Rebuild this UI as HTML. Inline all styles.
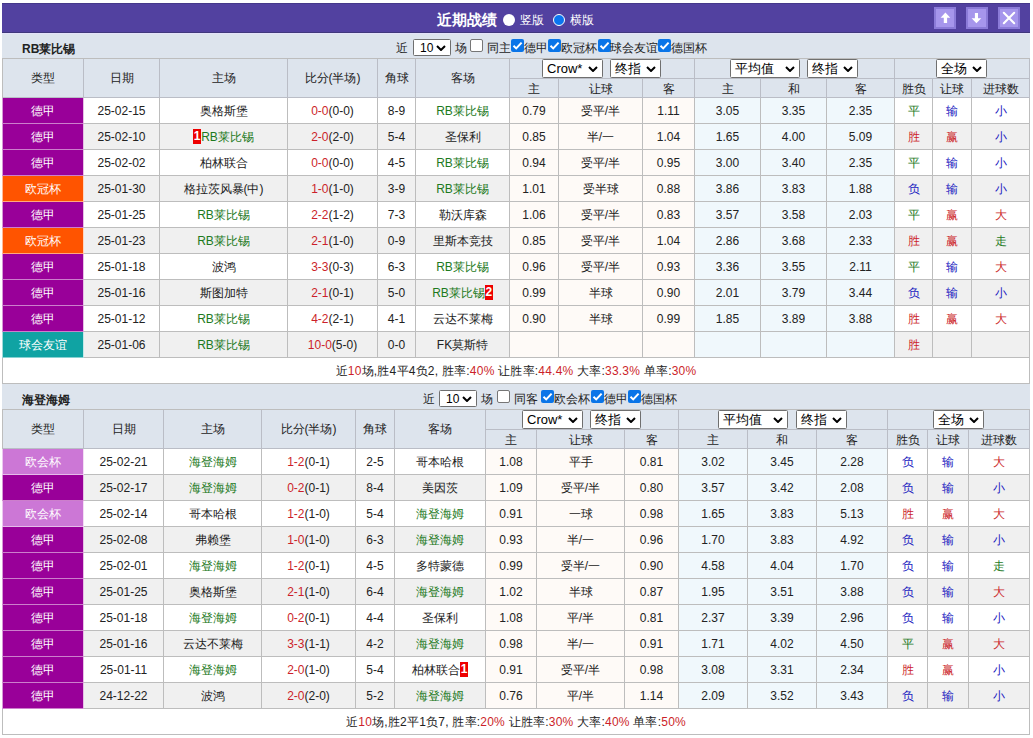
<!DOCTYPE html><html><head><meta charset="utf-8"><style>
*{margin:0;padding:0;box-sizing:border-box}
html,body{width:1033px;height:738px;overflow:hidden;background:#fff}
body{font-family:"Liberation Sans",sans-serif;font-size:12px;color:#222;position:relative}
.c{position:absolute;border-right:1px solid #bdbdbd;border-bottom:1px solid #bdbdbd;text-align:center;white-space:nowrap;overflow:hidden}
.ln{position:absolute;background:#bdbdbd}
.lg{color:#fff;border-left:1px solid rgba(255,255,255,.6);border-right-color:rgba(255,255,255,.75);border-bottom-color:rgba(255,255,255,.5)}
.h{border-color:#babdc6}
.bd{display:inline-block;background:#e00;color:#fff;font-weight:bold;line-height:15px;height:15px;width:8px;text-align:center;vertical-align:middle;position:relative;top:-1px}
.bar{position:absolute;left:2px;top:3px;width:1028px;height:30px;background:#5241a0;border-top:1px solid #45388a;border-bottom:1px solid #40387c}
.title{position:absolute;left:435px;top:1px;line-height:30px;color:#fff;font-weight:bold;font-size:15px}
.btn{position:absolute;top:4px;width:22px;height:22px;background:#a696ec;border:2px solid #8b7bd8}
.team{position:absolute;left:2px;width:1028px;height:25px;background:#dde4ed}
.tn{position:absolute;left:20px;font-weight:bold;line-height:25px}
.sel{position:absolute;background:#fff;border:1px solid #6f6f6f;border-radius:1.5px;color:#000;padding-left:4px;text-align:left;white-space:nowrap}
.ct{position:absolute;line-height:25px;white-space:nowrap}
.sum{position:absolute;text-align:center;color:#333}
.r{color:#cc1f2a}
.cb{display:inline-block;width:13px;height:13px;vertical-align:-2px;border-radius:2px}
.cb.on{background:#0a75e8;position:relative}
.cb.off{background:#fff;border:1px solid #767676}
.ctrl{position:absolute;line-height:25px;white-space:nowrap}
</style></head><body>
<div class="bar"><div class="title">近期战绩</div>
</div>
<div style="position:absolute;left:503px;top:14px;width:12px;height:12px;border-radius:50%;background:#fff"></div>
<div style="position:absolute;left:520px;top:5px;line-height:30px;color:#fff">竖版</div>
<div style="position:absolute;left:553px;top:14px;width:12px;height:12px;border-radius:50%;background:#0a75f0;border:1.6px solid #fff"></div>
<div style="position:absolute;left:570px;top:5px;line-height:30px;color:#fff">横版</div>
<div class="btn" style="left:934px;top:7px"><svg width="18" height="18" viewBox="0 0 18 18" style="position:absolute;left:0;top:0"><path d="M9.4 3.6 L14.3 8.8 L11.1 8.8 L11.1 14 L7.8 14 L7.8 8.8 L4.6 8.8 Z" fill="#fff"/></svg></div>
<div class="btn" style="left:966px;top:7px"><svg width="18" height="18" viewBox="0 0 18 18" style="position:absolute;left:0;top:0"><path d="M8.4 14.2 L13.3 9.2 L10 9.2 L10 3.9 L6.9 3.9 L6.9 9.2 L3.6 9.2 Z" fill="#fff"/></svg></div>
<div class="btn" style="left:998px;top:7px"><svg width="18" height="18" viewBox="0 0 18 18" style="position:absolute;left:0;top:0"><path d="M3.8 3.8 L14.2 14.2 M14.2 3.8 L3.8 14.2" stroke="#fff" stroke-width="2.1" stroke-linecap="round"/></svg></div>
<div style="position:absolute;left:2px;top:33px;width:1028px;height:1px;background:#e4e2fa"></div>
<div class="team" style="top:34px;height:24px"></div>
<div class="tn" style="top:37px;left:22px">RB莱比锡</div>
<div class="ct" style="left:396px;top:36px">近</div>
<div class="sel" style="left:413px;top:39px;width:38px;height:17px;font-size:12px;line-height:17px;padding-left:6px">10<svg width="10" height="6" viewBox="0 0 10 6" style="position:absolute;right:4px;top:50%;margin-top:-3px"><path d="M1 1 L5 5 L9 1" stroke="#000" stroke-width="2" fill="none"/></svg></div>
<div class="ct" style="left:455px;top:36px">场</div>
<div style="position:absolute;left:470px;top:39px"><span class="cb off"></span></div>
<div class="ct" style="left:487px;top:36px">同主</div>
<div style="position:absolute;left:511px;top:39px"><span class="cb on"><svg width="13" height="13" viewBox="0 0 13 13" style="position:absolute;left:0;top:0"><path d="M2.5 6.8 L5.2 9.4 L10.6 3.6" stroke="#fff" stroke-width="2" fill="none"/></svg></span></div>
<div class="ct" style="left:524px;top:36px">德甲</div>
<div style="position:absolute;left:548px;top:39px"><span class="cb on"><svg width="13" height="13" viewBox="0 0 13 13" style="position:absolute;left:0;top:0"><path d="M2.5 6.8 L5.2 9.4 L10.6 3.6" stroke="#fff" stroke-width="2" fill="none"/></svg></span></div>
<div class="ct" style="left:561px;top:36px">欧冠杯</div>
<div style="position:absolute;left:598px;top:39px"><span class="cb on"><svg width="13" height="13" viewBox="0 0 13 13" style="position:absolute;left:0;top:0"><path d="M2.5 6.8 L5.2 9.4 L10.6 3.6" stroke="#fff" stroke-width="2" fill="none"/></svg></span></div>
<div class="ct" style="left:610px;top:36px">球会友谊</div>
<div style="position:absolute;left:658px;top:39px"><span class="cb on"><svg width="13" height="13" viewBox="0 0 13 13" style="position:absolute;left:0;top:0"><path d="M2.5 6.8 L5.2 9.4 L10.6 3.6" stroke="#fff" stroke-width="2" fill="none"/></svg></span></div>
<div class="ct" style="left:671px;top:36px">德国杯</div>
<div class="ln" style="left:2px;top:58px;width:1028px;height:1px"></div>
<div class="ln" style="left:2px;top:58px;width:1px;height:326px"></div>
<div class="c h" style="left:3px;top:59px;width:81px;height:39px;line-height:38px;padding-top:0px;background:#dde4ed;">类型</div>
<div class="c h" style="left:84px;top:59px;width:76px;height:39px;line-height:38px;padding-top:0px;background:#dde4ed;">日期</div>
<div class="c h" style="left:160px;top:59px;width:128px;height:39px;line-height:38px;padding-top:0px;background:#dde4ed;">主场</div>
<div class="c h" style="left:288px;top:59px;width:90px;height:39px;line-height:38px;padding-top:0px;background:#dde4ed;">比分(半场)</div>
<div class="c h" style="left:378px;top:59px;width:38px;height:39px;line-height:38px;padding-top:0px;background:#dde4ed;">角球</div>
<div class="c h" style="left:416px;top:59px;width:94px;height:39px;line-height:38px;padding-top:0px;background:#dde4ed;">客场</div>
<div class="c h" style="left:510px;top:59px;width:185px;height:20px;line-height:19px;padding-top:0px;background:#dde4ed;"></div>
<div class="c h" style="left:510px;top:79px;width:49px;height:19px;line-height:18px;padding-top:1px;background:#dde4ed;">主</div>
<div class="c h" style="left:559px;top:79px;width:84px;height:19px;line-height:18px;padding-top:1px;background:#dde4ed;">让球</div>
<div class="c h" style="left:643px;top:79px;width:52px;height:19px;line-height:18px;padding-top:1px;background:#dde4ed;">客</div>
<div class="c h" style="left:695px;top:59px;width:200px;height:20px;line-height:19px;padding-top:0px;background:#dde4ed;"></div>
<div class="c h" style="left:695px;top:79px;width:66px;height:19px;line-height:18px;padding-top:1px;background:#dde4ed;">主</div>
<div class="c h" style="left:761px;top:79px;width:66px;height:19px;line-height:18px;padding-top:1px;background:#dde4ed;">和</div>
<div class="c h" style="left:827px;top:79px;width:68px;height:19px;line-height:18px;padding-top:1px;background:#dde4ed;">客</div>
<div class="c h" style="left:895px;top:59px;width:135px;height:20px;line-height:19px;padding-top:0px;background:#dde4ed;"></div>
<div class="c h" style="left:895px;top:79px;width:38px;height:19px;line-height:18px;padding-top:1px;background:#dde4ed;">胜负</div>
<div class="c h" style="left:933px;top:79px;width:39px;height:19px;line-height:18px;padding-top:1px;background:#dde4ed;">让球</div>
<div class="c h" style="left:972px;top:79px;width:58px;height:19px;line-height:18px;padding-top:1px;background:#dde4ed;">进球数</div>
<div class="c lg" style="left:2px;top:98px;width:82px;height:26px;line-height:25px;padding-top:1px;background:#990099;">德甲</div>
<div class="c" style="left:84px;top:98px;width:76px;height:26px;line-height:25px;padding-top:1px;background:#fff;">25-02-15</div>
<div class="c" style="left:160px;top:98px;width:128px;height:26px;line-height:25px;padding-top:1px;background:#fff;"><span>奥格斯堡</span></div>
<div class="c" style="left:288px;top:98px;width:90px;height:26px;line-height:25px;padding-top:1px;background:#fff;"><span style="color:#cc1f2a">0-0</span>(0-0)</div>
<div class="c" style="left:378px;top:98px;width:38px;height:26px;line-height:25px;padding-top:1px;background:#fff;">8-9</div>
<div class="c" style="left:416px;top:98px;width:94px;height:26px;line-height:25px;padding-top:1px;background:#fff;"><span style="color:#1d7a1d">RB莱比锡</span></div>
<div class="c" style="left:510px;top:98px;width:49px;height:26px;line-height:25px;padding-top:1px;background:#fefaf7;">0.79</div>
<div class="c" style="left:559px;top:98px;width:84px;height:26px;line-height:25px;padding-top:1px;background:#fefaf7;">受平/半</div>
<div class="c" style="left:643px;top:98px;width:52px;height:26px;line-height:25px;padding-top:1px;background:#fefaf7;">1.11</div>
<div class="c" style="left:695px;top:98px;width:66px;height:26px;line-height:25px;padding-top:1px;background:#f0f8fc;">3.05</div>
<div class="c" style="left:761px;top:98px;width:66px;height:26px;line-height:25px;padding-top:1px;background:#f0f8fc;">3.35</div>
<div class="c" style="left:827px;top:98px;width:68px;height:26px;line-height:25px;padding-top:1px;background:#f0f8fc;">2.35</div>
<div class="c" style="left:895px;top:98px;width:38px;height:26px;line-height:25px;padding-top:1px;background:#fff;"><span style="color:#1d7a1d">平</span></div>
<div class="c" style="left:933px;top:98px;width:39px;height:26px;line-height:25px;padding-top:1px;background:#fff;"><span style="color:#2020c0">输</span></div>
<div class="c" style="left:972px;top:98px;width:58px;height:26px;line-height:25px;padding-top:1px;background:#fff;"><span style="color:#2020c0">小</span></div>
<div class="c lg" style="left:2px;top:124px;width:82px;height:26px;line-height:25px;padding-top:1px;background:#990099;">德甲</div>
<div class="c" style="left:84px;top:124px;width:76px;height:26px;line-height:25px;padding-top:1px;background:#f0f0f0;">25-02-10</div>
<div class="c" style="left:160px;top:124px;width:128px;height:26px;line-height:25px;padding-top:1px;background:#f0f0f0;"><span class="bd">1</span><span style="color:#1d7a1d">RB莱比锡</span></div>
<div class="c" style="left:288px;top:124px;width:90px;height:26px;line-height:25px;padding-top:1px;background:#f0f0f0;"><span style="color:#cc1f2a">2-0</span>(2-0)</div>
<div class="c" style="left:378px;top:124px;width:38px;height:26px;line-height:25px;padding-top:1px;background:#f0f0f0;">5-4</div>
<div class="c" style="left:416px;top:124px;width:94px;height:26px;line-height:25px;padding-top:1px;background:#f0f0f0;"><span>圣保利</span></div>
<div class="c" style="left:510px;top:124px;width:49px;height:26px;line-height:25px;padding-top:1px;background:#fefaf7;">0.85</div>
<div class="c" style="left:559px;top:124px;width:84px;height:26px;line-height:25px;padding-top:1px;background:#fefaf7;">半/一</div>
<div class="c" style="left:643px;top:124px;width:52px;height:26px;line-height:25px;padding-top:1px;background:#fefaf7;">1.04</div>
<div class="c" style="left:695px;top:124px;width:66px;height:26px;line-height:25px;padding-top:1px;background:#f0f8fc;">1.65</div>
<div class="c" style="left:761px;top:124px;width:66px;height:26px;line-height:25px;padding-top:1px;background:#f0f8fc;">4.00</div>
<div class="c" style="left:827px;top:124px;width:68px;height:26px;line-height:25px;padding-top:1px;background:#f0f8fc;">5.09</div>
<div class="c" style="left:895px;top:124px;width:38px;height:26px;line-height:25px;padding-top:1px;background:#f0f0f0;"><span style="color:#cc1f2a">胜</span></div>
<div class="c" style="left:933px;top:124px;width:39px;height:26px;line-height:25px;padding-top:1px;background:#f0f0f0;"><span style="color:#cc1f2a">赢</span></div>
<div class="c" style="left:972px;top:124px;width:58px;height:26px;line-height:25px;padding-top:1px;background:#f0f0f0;"><span style="color:#2020c0">小</span></div>
<div class="c lg" style="left:2px;top:150px;width:82px;height:26px;line-height:25px;padding-top:1px;background:#990099;">德甲</div>
<div class="c" style="left:84px;top:150px;width:76px;height:26px;line-height:25px;padding-top:1px;background:#fff;">25-02-02</div>
<div class="c" style="left:160px;top:150px;width:128px;height:26px;line-height:25px;padding-top:1px;background:#fff;"><span>柏林联合</span></div>
<div class="c" style="left:288px;top:150px;width:90px;height:26px;line-height:25px;padding-top:1px;background:#fff;"><span style="color:#cc1f2a">0-0</span>(0-0)</div>
<div class="c" style="left:378px;top:150px;width:38px;height:26px;line-height:25px;padding-top:1px;background:#fff;">4-5</div>
<div class="c" style="left:416px;top:150px;width:94px;height:26px;line-height:25px;padding-top:1px;background:#fff;"><span style="color:#1d7a1d">RB莱比锡</span></div>
<div class="c" style="left:510px;top:150px;width:49px;height:26px;line-height:25px;padding-top:1px;background:#fefaf7;">0.94</div>
<div class="c" style="left:559px;top:150px;width:84px;height:26px;line-height:25px;padding-top:1px;background:#fefaf7;">受平/半</div>
<div class="c" style="left:643px;top:150px;width:52px;height:26px;line-height:25px;padding-top:1px;background:#fefaf7;">0.95</div>
<div class="c" style="left:695px;top:150px;width:66px;height:26px;line-height:25px;padding-top:1px;background:#f0f8fc;">3.00</div>
<div class="c" style="left:761px;top:150px;width:66px;height:26px;line-height:25px;padding-top:1px;background:#f0f8fc;">3.40</div>
<div class="c" style="left:827px;top:150px;width:68px;height:26px;line-height:25px;padding-top:1px;background:#f0f8fc;">2.35</div>
<div class="c" style="left:895px;top:150px;width:38px;height:26px;line-height:25px;padding-top:1px;background:#fff;"><span style="color:#1d7a1d">平</span></div>
<div class="c" style="left:933px;top:150px;width:39px;height:26px;line-height:25px;padding-top:1px;background:#fff;"><span style="color:#2020c0">输</span></div>
<div class="c" style="left:972px;top:150px;width:58px;height:26px;line-height:25px;padding-top:1px;background:#fff;"><span style="color:#2020c0">小</span></div>
<div class="c lg" style="left:2px;top:176px;width:82px;height:26px;line-height:25px;padding-top:1px;background:#ff5400;">欧冠杯</div>
<div class="c" style="left:84px;top:176px;width:76px;height:26px;line-height:25px;padding-top:1px;background:#f0f0f0;">25-01-30</div>
<div class="c" style="left:160px;top:176px;width:128px;height:26px;line-height:25px;padding-top:1px;background:#f0f0f0;"><span>格拉茨风暴(中)</span></div>
<div class="c" style="left:288px;top:176px;width:90px;height:26px;line-height:25px;padding-top:1px;background:#f0f0f0;"><span style="color:#cc1f2a">1-0</span>(1-0)</div>
<div class="c" style="left:378px;top:176px;width:38px;height:26px;line-height:25px;padding-top:1px;background:#f0f0f0;">3-9</div>
<div class="c" style="left:416px;top:176px;width:94px;height:26px;line-height:25px;padding-top:1px;background:#f0f0f0;"><span style="color:#1d7a1d">RB莱比锡</span></div>
<div class="c" style="left:510px;top:176px;width:49px;height:26px;line-height:25px;padding-top:1px;background:#fefaf7;">1.01</div>
<div class="c" style="left:559px;top:176px;width:84px;height:26px;line-height:25px;padding-top:1px;background:#fefaf7;">受半球</div>
<div class="c" style="left:643px;top:176px;width:52px;height:26px;line-height:25px;padding-top:1px;background:#fefaf7;">0.88</div>
<div class="c" style="left:695px;top:176px;width:66px;height:26px;line-height:25px;padding-top:1px;background:#f0f8fc;">3.86</div>
<div class="c" style="left:761px;top:176px;width:66px;height:26px;line-height:25px;padding-top:1px;background:#f0f8fc;">3.83</div>
<div class="c" style="left:827px;top:176px;width:68px;height:26px;line-height:25px;padding-top:1px;background:#f0f8fc;">1.88</div>
<div class="c" style="left:895px;top:176px;width:38px;height:26px;line-height:25px;padding-top:1px;background:#f0f0f0;"><span style="color:#2020c0">负</span></div>
<div class="c" style="left:933px;top:176px;width:39px;height:26px;line-height:25px;padding-top:1px;background:#f0f0f0;"><span style="color:#2020c0">输</span></div>
<div class="c" style="left:972px;top:176px;width:58px;height:26px;line-height:25px;padding-top:1px;background:#f0f0f0;"><span style="color:#2020c0">小</span></div>
<div class="c lg" style="left:2px;top:202px;width:82px;height:26px;line-height:25px;padding-top:1px;background:#990099;">德甲</div>
<div class="c" style="left:84px;top:202px;width:76px;height:26px;line-height:25px;padding-top:1px;background:#fff;">25-01-25</div>
<div class="c" style="left:160px;top:202px;width:128px;height:26px;line-height:25px;padding-top:1px;background:#fff;"><span style="color:#1d7a1d">RB莱比锡</span></div>
<div class="c" style="left:288px;top:202px;width:90px;height:26px;line-height:25px;padding-top:1px;background:#fff;"><span style="color:#cc1f2a">2-2</span>(1-2)</div>
<div class="c" style="left:378px;top:202px;width:38px;height:26px;line-height:25px;padding-top:1px;background:#fff;">7-3</div>
<div class="c" style="left:416px;top:202px;width:94px;height:26px;line-height:25px;padding-top:1px;background:#fff;"><span>勒沃库森</span></div>
<div class="c" style="left:510px;top:202px;width:49px;height:26px;line-height:25px;padding-top:1px;background:#fefaf7;">1.06</div>
<div class="c" style="left:559px;top:202px;width:84px;height:26px;line-height:25px;padding-top:1px;background:#fefaf7;">受平/半</div>
<div class="c" style="left:643px;top:202px;width:52px;height:26px;line-height:25px;padding-top:1px;background:#fefaf7;">0.83</div>
<div class="c" style="left:695px;top:202px;width:66px;height:26px;line-height:25px;padding-top:1px;background:#f0f8fc;">3.57</div>
<div class="c" style="left:761px;top:202px;width:66px;height:26px;line-height:25px;padding-top:1px;background:#f0f8fc;">3.58</div>
<div class="c" style="left:827px;top:202px;width:68px;height:26px;line-height:25px;padding-top:1px;background:#f0f8fc;">2.03</div>
<div class="c" style="left:895px;top:202px;width:38px;height:26px;line-height:25px;padding-top:1px;background:#fff;"><span style="color:#1d7a1d">平</span></div>
<div class="c" style="left:933px;top:202px;width:39px;height:26px;line-height:25px;padding-top:1px;background:#fff;"><span style="color:#cc1f2a">赢</span></div>
<div class="c" style="left:972px;top:202px;width:58px;height:26px;line-height:25px;padding-top:1px;background:#fff;"><span style="color:#cc1f2a">大</span></div>
<div class="c lg" style="left:2px;top:228px;width:82px;height:26px;line-height:25px;padding-top:1px;background:#ff5400;">欧冠杯</div>
<div class="c" style="left:84px;top:228px;width:76px;height:26px;line-height:25px;padding-top:1px;background:#f0f0f0;">25-01-23</div>
<div class="c" style="left:160px;top:228px;width:128px;height:26px;line-height:25px;padding-top:1px;background:#f0f0f0;"><span style="color:#1d7a1d">RB莱比锡</span></div>
<div class="c" style="left:288px;top:228px;width:90px;height:26px;line-height:25px;padding-top:1px;background:#f0f0f0;"><span style="color:#cc1f2a">2-1</span>(1-0)</div>
<div class="c" style="left:378px;top:228px;width:38px;height:26px;line-height:25px;padding-top:1px;background:#f0f0f0;">0-9</div>
<div class="c" style="left:416px;top:228px;width:94px;height:26px;line-height:25px;padding-top:1px;background:#f0f0f0;"><span>里斯本竞技</span></div>
<div class="c" style="left:510px;top:228px;width:49px;height:26px;line-height:25px;padding-top:1px;background:#fefaf7;">0.85</div>
<div class="c" style="left:559px;top:228px;width:84px;height:26px;line-height:25px;padding-top:1px;background:#fefaf7;">受平/半</div>
<div class="c" style="left:643px;top:228px;width:52px;height:26px;line-height:25px;padding-top:1px;background:#fefaf7;">1.04</div>
<div class="c" style="left:695px;top:228px;width:66px;height:26px;line-height:25px;padding-top:1px;background:#f0f8fc;">2.86</div>
<div class="c" style="left:761px;top:228px;width:66px;height:26px;line-height:25px;padding-top:1px;background:#f0f8fc;">3.68</div>
<div class="c" style="left:827px;top:228px;width:68px;height:26px;line-height:25px;padding-top:1px;background:#f0f8fc;">2.33</div>
<div class="c" style="left:895px;top:228px;width:38px;height:26px;line-height:25px;padding-top:1px;background:#f0f0f0;"><span style="color:#cc1f2a">胜</span></div>
<div class="c" style="left:933px;top:228px;width:39px;height:26px;line-height:25px;padding-top:1px;background:#f0f0f0;"><span style="color:#cc1f2a">赢</span></div>
<div class="c" style="left:972px;top:228px;width:58px;height:26px;line-height:25px;padding-top:1px;background:#f0f0f0;"><span style="color:#1d7a1d">走</span></div>
<div class="c lg" style="left:2px;top:254px;width:82px;height:26px;line-height:25px;padding-top:1px;background:#990099;">德甲</div>
<div class="c" style="left:84px;top:254px;width:76px;height:26px;line-height:25px;padding-top:1px;background:#fff;">25-01-18</div>
<div class="c" style="left:160px;top:254px;width:128px;height:26px;line-height:25px;padding-top:1px;background:#fff;"><span>波鸿</span></div>
<div class="c" style="left:288px;top:254px;width:90px;height:26px;line-height:25px;padding-top:1px;background:#fff;"><span style="color:#cc1f2a">3-3</span>(0-3)</div>
<div class="c" style="left:378px;top:254px;width:38px;height:26px;line-height:25px;padding-top:1px;background:#fff;">6-3</div>
<div class="c" style="left:416px;top:254px;width:94px;height:26px;line-height:25px;padding-top:1px;background:#fff;"><span style="color:#1d7a1d">RB莱比锡</span></div>
<div class="c" style="left:510px;top:254px;width:49px;height:26px;line-height:25px;padding-top:1px;background:#fefaf7;">0.96</div>
<div class="c" style="left:559px;top:254px;width:84px;height:26px;line-height:25px;padding-top:1px;background:#fefaf7;">受平/半</div>
<div class="c" style="left:643px;top:254px;width:52px;height:26px;line-height:25px;padding-top:1px;background:#fefaf7;">0.93</div>
<div class="c" style="left:695px;top:254px;width:66px;height:26px;line-height:25px;padding-top:1px;background:#f0f8fc;">3.36</div>
<div class="c" style="left:761px;top:254px;width:66px;height:26px;line-height:25px;padding-top:1px;background:#f0f8fc;">3.55</div>
<div class="c" style="left:827px;top:254px;width:68px;height:26px;line-height:25px;padding-top:1px;background:#f0f8fc;">2.11</div>
<div class="c" style="left:895px;top:254px;width:38px;height:26px;line-height:25px;padding-top:1px;background:#fff;"><span style="color:#1d7a1d">平</span></div>
<div class="c" style="left:933px;top:254px;width:39px;height:26px;line-height:25px;padding-top:1px;background:#fff;"><span style="color:#2020c0">输</span></div>
<div class="c" style="left:972px;top:254px;width:58px;height:26px;line-height:25px;padding-top:1px;background:#fff;"><span style="color:#cc1f2a">大</span></div>
<div class="c lg" style="left:2px;top:280px;width:82px;height:26px;line-height:25px;padding-top:1px;background:#990099;">德甲</div>
<div class="c" style="left:84px;top:280px;width:76px;height:26px;line-height:25px;padding-top:1px;background:#f0f0f0;">25-01-16</div>
<div class="c" style="left:160px;top:280px;width:128px;height:26px;line-height:25px;padding-top:1px;background:#f0f0f0;"><span>斯图加特</span></div>
<div class="c" style="left:288px;top:280px;width:90px;height:26px;line-height:25px;padding-top:1px;background:#f0f0f0;"><span style="color:#cc1f2a">2-1</span>(0-1)</div>
<div class="c" style="left:378px;top:280px;width:38px;height:26px;line-height:25px;padding-top:1px;background:#f0f0f0;">5-0</div>
<div class="c" style="left:416px;top:280px;width:94px;height:26px;line-height:25px;padding-top:1px;background:#f0f0f0;"><span style="color:#1d7a1d">RB莱比锡</span><span class="bd">2</span></div>
<div class="c" style="left:510px;top:280px;width:49px;height:26px;line-height:25px;padding-top:1px;background:#fefaf7;">0.99</div>
<div class="c" style="left:559px;top:280px;width:84px;height:26px;line-height:25px;padding-top:1px;background:#fefaf7;">半球</div>
<div class="c" style="left:643px;top:280px;width:52px;height:26px;line-height:25px;padding-top:1px;background:#fefaf7;">0.90</div>
<div class="c" style="left:695px;top:280px;width:66px;height:26px;line-height:25px;padding-top:1px;background:#f0f8fc;">2.01</div>
<div class="c" style="left:761px;top:280px;width:66px;height:26px;line-height:25px;padding-top:1px;background:#f0f8fc;">3.79</div>
<div class="c" style="left:827px;top:280px;width:68px;height:26px;line-height:25px;padding-top:1px;background:#f0f8fc;">3.44</div>
<div class="c" style="left:895px;top:280px;width:38px;height:26px;line-height:25px;padding-top:1px;background:#f0f0f0;"><span style="color:#2020c0">负</span></div>
<div class="c" style="left:933px;top:280px;width:39px;height:26px;line-height:25px;padding-top:1px;background:#f0f0f0;"><span style="color:#2020c0">输</span></div>
<div class="c" style="left:972px;top:280px;width:58px;height:26px;line-height:25px;padding-top:1px;background:#f0f0f0;"><span style="color:#2020c0">小</span></div>
<div class="c lg" style="left:2px;top:306px;width:82px;height:26px;line-height:25px;padding-top:1px;background:#990099;">德甲</div>
<div class="c" style="left:84px;top:306px;width:76px;height:26px;line-height:25px;padding-top:1px;background:#fff;">25-01-12</div>
<div class="c" style="left:160px;top:306px;width:128px;height:26px;line-height:25px;padding-top:1px;background:#fff;"><span style="color:#1d7a1d">RB莱比锡</span></div>
<div class="c" style="left:288px;top:306px;width:90px;height:26px;line-height:25px;padding-top:1px;background:#fff;"><span style="color:#cc1f2a">4-2</span>(2-1)</div>
<div class="c" style="left:378px;top:306px;width:38px;height:26px;line-height:25px;padding-top:1px;background:#fff;">4-1</div>
<div class="c" style="left:416px;top:306px;width:94px;height:26px;line-height:25px;padding-top:1px;background:#fff;"><span>云达不莱梅</span></div>
<div class="c" style="left:510px;top:306px;width:49px;height:26px;line-height:25px;padding-top:1px;background:#fefaf7;">0.90</div>
<div class="c" style="left:559px;top:306px;width:84px;height:26px;line-height:25px;padding-top:1px;background:#fefaf7;">半球</div>
<div class="c" style="left:643px;top:306px;width:52px;height:26px;line-height:25px;padding-top:1px;background:#fefaf7;">0.99</div>
<div class="c" style="left:695px;top:306px;width:66px;height:26px;line-height:25px;padding-top:1px;background:#f0f8fc;">1.85</div>
<div class="c" style="left:761px;top:306px;width:66px;height:26px;line-height:25px;padding-top:1px;background:#f0f8fc;">3.89</div>
<div class="c" style="left:827px;top:306px;width:68px;height:26px;line-height:25px;padding-top:1px;background:#f0f8fc;">3.88</div>
<div class="c" style="left:895px;top:306px;width:38px;height:26px;line-height:25px;padding-top:1px;background:#fff;"><span style="color:#cc1f2a">胜</span></div>
<div class="c" style="left:933px;top:306px;width:39px;height:26px;line-height:25px;padding-top:1px;background:#fff;"><span style="color:#cc1f2a">赢</span></div>
<div class="c" style="left:972px;top:306px;width:58px;height:26px;line-height:25px;padding-top:1px;background:#fff;"><span style="color:#cc1f2a">大</span></div>
<div class="c lg" style="left:2px;top:332px;width:82px;height:26px;line-height:25px;padding-top:1px;background:#10a3a3;">球会友谊</div>
<div class="c" style="left:84px;top:332px;width:76px;height:26px;line-height:25px;padding-top:1px;background:#f0f0f0;">25-01-06</div>
<div class="c" style="left:160px;top:332px;width:128px;height:26px;line-height:25px;padding-top:1px;background:#f0f0f0;"><span style="color:#1d7a1d">RB莱比锡</span></div>
<div class="c" style="left:288px;top:332px;width:90px;height:26px;line-height:25px;padding-top:1px;background:#f0f0f0;"><span style="color:#cc1f2a">10-0</span>(5-0)</div>
<div class="c" style="left:378px;top:332px;width:38px;height:26px;line-height:25px;padding-top:1px;background:#f0f0f0;">0-0</div>
<div class="c" style="left:416px;top:332px;width:94px;height:26px;line-height:25px;padding-top:1px;background:#f0f0f0;"><span>FK莫斯特</span></div>
<div class="c" style="left:510px;top:332px;width:49px;height:26px;line-height:25px;padding-top:1px;background:#fefaf7;"></div>
<div class="c" style="left:559px;top:332px;width:84px;height:26px;line-height:25px;padding-top:1px;background:#fefaf7;"></div>
<div class="c" style="left:643px;top:332px;width:52px;height:26px;line-height:25px;padding-top:1px;background:#fefaf7;"></div>
<div class="c" style="left:695px;top:332px;width:66px;height:26px;line-height:25px;padding-top:1px;background:#f0f8fc;"></div>
<div class="c" style="left:761px;top:332px;width:66px;height:26px;line-height:25px;padding-top:1px;background:#f0f8fc;"></div>
<div class="c" style="left:827px;top:332px;width:68px;height:26px;line-height:25px;padding-top:1px;background:#f0f8fc;"></div>
<div class="c" style="left:895px;top:332px;width:38px;height:26px;line-height:25px;padding-top:1px;background:#f0f0f0;"><span style="color:#cc1f2a">胜</span></div>
<div class="c" style="left:933px;top:332px;width:39px;height:26px;line-height:25px;padding-top:1px;background:#f0f0f0;"></div>
<div class="c" style="left:972px;top:332px;width:58px;height:26px;line-height:25px;padding-top:1px;background:#f0f0f0;"></div>
<div class="sel" style="left:542px;top:59px;width:61px;height:19px;font-size:13px;line-height:17px">Crow*<svg width="10" height="6" viewBox="0 0 10 6" style="position:absolute;right:4px;top:50%;margin-top:-3px"><path d="M1 1 L5 5 L9 1" stroke="#000" stroke-width="2" fill="none"/></svg></div>
<div class="sel" style="left:610px;top:59px;width:51px;height:19px;font-size:13px;line-height:17px">终指<svg width="10" height="6" viewBox="0 0 10 6" style="position:absolute;right:4px;top:50%;margin-top:-3px"><path d="M1 1 L5 5 L9 1" stroke="#000" stroke-width="2" fill="none"/></svg></div>
<div class="sel" style="left:730px;top:59px;width:70px;height:19px;font-size:13px;line-height:17px">平均值<svg width="10" height="6" viewBox="0 0 10 6" style="position:absolute;right:4px;top:50%;margin-top:-3px"><path d="M1 1 L5 5 L9 1" stroke="#000" stroke-width="2" fill="none"/></svg></div>
<div class="sel" style="left:807px;top:59px;width:51px;height:19px;font-size:13px;line-height:17px">终指<svg width="10" height="6" viewBox="0 0 10 6" style="position:absolute;right:4px;top:50%;margin-top:-3px"><path d="M1 1 L5 5 L9 1" stroke="#000" stroke-width="2" fill="none"/></svg></div>
<div class="sel" style="left:936px;top:59px;width:51px;height:19px;font-size:13px;line-height:17px">全场<svg width="10" height="6" viewBox="0 0 10 6" style="position:absolute;right:4px;top:50%;margin-top:-3px"><path d="M1 1 L5 5 L9 1" stroke="#000" stroke-width="2" fill="none"/></svg></div>
<div class="c" style="left:3px;top:358px;width:1027px;height:26px;line-height:25px;padding-top:1px;letter-spacing:.22px">近<span class="r">10</span>场,胜4平4负2, 胜率:<span class="r">40%</span> 让胜率:<span class="r">44.4%</span> 大率:<span class="r">33.3%</span> 单率:<span class="r">30%</span></div>
<div class="team" style="top:384px;height:25px"></div>
<div class="tn" style="top:388px;left:22px">海登海姆</div>
<div class="ct" style="left:423px;top:387px">近</div>
<div class="sel" style="left:439px;top:390px;width:38px;height:17px;font-size:12px;line-height:17px;padding-left:6px">10<svg width="10" height="6" viewBox="0 0 10 6" style="position:absolute;right:4px;top:50%;margin-top:-3px"><path d="M1 1 L5 5 L9 1" stroke="#000" stroke-width="2" fill="none"/></svg></div>
<div class="ct" style="left:481px;top:387px">场</div>
<div style="position:absolute;left:497px;top:390px"><span class="cb off"></span></div>
<div class="ct" style="left:514px;top:387px">同客</div>
<div style="position:absolute;left:541px;top:390px"><span class="cb on"><svg width="13" height="13" viewBox="0 0 13 13" style="position:absolute;left:0;top:0"><path d="M2.5 6.8 L5.2 9.4 L10.6 3.6" stroke="#fff" stroke-width="2" fill="none"/></svg></span></div>
<div class="ct" style="left:554px;top:387px">欧会杯</div>
<div style="position:absolute;left:591px;top:390px"><span class="cb on"><svg width="13" height="13" viewBox="0 0 13 13" style="position:absolute;left:0;top:0"><path d="M2.5 6.8 L5.2 9.4 L10.6 3.6" stroke="#fff" stroke-width="2" fill="none"/></svg></span></div>
<div class="ct" style="left:604px;top:387px">德甲</div>
<div style="position:absolute;left:628px;top:390px"><span class="cb on"><svg width="13" height="13" viewBox="0 0 13 13" style="position:absolute;left:0;top:0"><path d="M2.5 6.8 L5.2 9.4 L10.6 3.6" stroke="#fff" stroke-width="2" fill="none"/></svg></span></div>
<div class="ct" style="left:641px;top:387px">德国杯</div>
<div class="ln" style="left:2px;top:409px;width:1028px;height:1px"></div>
<div class="ln" style="left:2px;top:409px;width:1px;height:326px"></div>
<div class="c h" style="left:3px;top:410px;width:81px;height:39px;line-height:38px;padding-top:0px;background:#dde4ed;">类型</div>
<div class="c h" style="left:84px;top:410px;width:80px;height:39px;line-height:38px;padding-top:0px;background:#dde4ed;">日期</div>
<div class="c h" style="left:164px;top:410px;width:98px;height:39px;line-height:38px;padding-top:0px;background:#dde4ed;">主场</div>
<div class="c h" style="left:262px;top:410px;width:94px;height:39px;line-height:38px;padding-top:0px;background:#dde4ed;">比分(半场)</div>
<div class="c h" style="left:356px;top:410px;width:39px;height:39px;line-height:38px;padding-top:0px;background:#dde4ed;">角球</div>
<div class="c h" style="left:395px;top:410px;width:91px;height:39px;line-height:38px;padding-top:0px;background:#dde4ed;">客场</div>
<div class="c h" style="left:486px;top:410px;width:193px;height:20px;line-height:19px;padding-top:0px;background:#dde4ed;"></div>
<div class="c h" style="left:486px;top:430px;width:51px;height:19px;line-height:18px;padding-top:1px;background:#dde4ed;">主</div>
<div class="c h" style="left:537px;top:430px;width:88px;height:19px;line-height:18px;padding-top:1px;background:#dde4ed;">让球</div>
<div class="c h" style="left:625px;top:430px;width:54px;height:19px;line-height:18px;padding-top:1px;background:#dde4ed;">客</div>
<div class="c h" style="left:679px;top:410px;width:209px;height:20px;line-height:19px;padding-top:0px;background:#dde4ed;"></div>
<div class="c h" style="left:679px;top:430px;width:69px;height:19px;line-height:18px;padding-top:1px;background:#dde4ed;">主</div>
<div class="c h" style="left:748px;top:430px;width:69px;height:19px;line-height:18px;padding-top:1px;background:#dde4ed;">和</div>
<div class="c h" style="left:817px;top:430px;width:71px;height:19px;line-height:18px;padding-top:1px;background:#dde4ed;">客</div>
<div class="c h" style="left:888px;top:410px;width:142px;height:20px;line-height:19px;padding-top:0px;background:#dde4ed;"></div>
<div class="c h" style="left:888px;top:430px;width:40px;height:19px;line-height:18px;padding-top:1px;background:#dde4ed;">胜负</div>
<div class="c h" style="left:928px;top:430px;width:41px;height:19px;line-height:18px;padding-top:1px;background:#dde4ed;">让球</div>
<div class="c h" style="left:969px;top:430px;width:61px;height:19px;line-height:18px;padding-top:1px;background:#dde4ed;">进球数</div>
<div class="c lg" style="left:2px;top:449px;width:82px;height:26px;line-height:25px;padding-top:1px;background:#cc77d6;">欧会杯</div>
<div class="c" style="left:84px;top:449px;width:80px;height:26px;line-height:25px;padding-top:1px;background:#fff;">25-02-21</div>
<div class="c" style="left:164px;top:449px;width:98px;height:26px;line-height:25px;padding-top:1px;background:#fff;"><span style="color:#1d7a1d">海登海姆</span></div>
<div class="c" style="left:262px;top:449px;width:94px;height:26px;line-height:25px;padding-top:1px;background:#fff;"><span style="color:#cc1f2a">1-2</span>(0-1)</div>
<div class="c" style="left:356px;top:449px;width:39px;height:26px;line-height:25px;padding-top:1px;background:#fff;">2-5</div>
<div class="c" style="left:395px;top:449px;width:91px;height:26px;line-height:25px;padding-top:1px;background:#fff;"><span>哥本哈根</span></div>
<div class="c" style="left:486px;top:449px;width:51px;height:26px;line-height:25px;padding-top:1px;background:#fefaf7;">1.08</div>
<div class="c" style="left:537px;top:449px;width:88px;height:26px;line-height:25px;padding-top:1px;background:#fefaf7;">平手</div>
<div class="c" style="left:625px;top:449px;width:54px;height:26px;line-height:25px;padding-top:1px;background:#fefaf7;">0.81</div>
<div class="c" style="left:679px;top:449px;width:69px;height:26px;line-height:25px;padding-top:1px;background:#f0f8fc;">3.02</div>
<div class="c" style="left:748px;top:449px;width:69px;height:26px;line-height:25px;padding-top:1px;background:#f0f8fc;">3.45</div>
<div class="c" style="left:817px;top:449px;width:71px;height:26px;line-height:25px;padding-top:1px;background:#f0f8fc;">2.28</div>
<div class="c" style="left:888px;top:449px;width:40px;height:26px;line-height:25px;padding-top:1px;background:#fff;"><span style="color:#2020c0">负</span></div>
<div class="c" style="left:928px;top:449px;width:41px;height:26px;line-height:25px;padding-top:1px;background:#fff;"><span style="color:#2020c0">输</span></div>
<div class="c" style="left:969px;top:449px;width:61px;height:26px;line-height:25px;padding-top:1px;background:#fff;"><span style="color:#cc1f2a">大</span></div>
<div class="c lg" style="left:2px;top:475px;width:82px;height:26px;line-height:25px;padding-top:1px;background:#990099;">德甲</div>
<div class="c" style="left:84px;top:475px;width:80px;height:26px;line-height:25px;padding-top:1px;background:#f0f0f0;">25-02-17</div>
<div class="c" style="left:164px;top:475px;width:98px;height:26px;line-height:25px;padding-top:1px;background:#f0f0f0;"><span style="color:#1d7a1d">海登海姆</span></div>
<div class="c" style="left:262px;top:475px;width:94px;height:26px;line-height:25px;padding-top:1px;background:#f0f0f0;"><span style="color:#cc1f2a">0-2</span>(0-1)</div>
<div class="c" style="left:356px;top:475px;width:39px;height:26px;line-height:25px;padding-top:1px;background:#f0f0f0;">8-4</div>
<div class="c" style="left:395px;top:475px;width:91px;height:26px;line-height:25px;padding-top:1px;background:#f0f0f0;"><span>美因茨</span></div>
<div class="c" style="left:486px;top:475px;width:51px;height:26px;line-height:25px;padding-top:1px;background:#fefaf7;">1.09</div>
<div class="c" style="left:537px;top:475px;width:88px;height:26px;line-height:25px;padding-top:1px;background:#fefaf7;">受平/半</div>
<div class="c" style="left:625px;top:475px;width:54px;height:26px;line-height:25px;padding-top:1px;background:#fefaf7;">0.80</div>
<div class="c" style="left:679px;top:475px;width:69px;height:26px;line-height:25px;padding-top:1px;background:#f0f8fc;">3.57</div>
<div class="c" style="left:748px;top:475px;width:69px;height:26px;line-height:25px;padding-top:1px;background:#f0f8fc;">3.42</div>
<div class="c" style="left:817px;top:475px;width:71px;height:26px;line-height:25px;padding-top:1px;background:#f0f8fc;">2.08</div>
<div class="c" style="left:888px;top:475px;width:40px;height:26px;line-height:25px;padding-top:1px;background:#f0f0f0;"><span style="color:#2020c0">负</span></div>
<div class="c" style="left:928px;top:475px;width:41px;height:26px;line-height:25px;padding-top:1px;background:#f0f0f0;"><span style="color:#2020c0">输</span></div>
<div class="c" style="left:969px;top:475px;width:61px;height:26px;line-height:25px;padding-top:1px;background:#f0f0f0;"><span style="color:#2020c0">小</span></div>
<div class="c lg" style="left:2px;top:501px;width:82px;height:26px;line-height:25px;padding-top:1px;background:#cc77d6;">欧会杯</div>
<div class="c" style="left:84px;top:501px;width:80px;height:26px;line-height:25px;padding-top:1px;background:#fff;">25-02-14</div>
<div class="c" style="left:164px;top:501px;width:98px;height:26px;line-height:25px;padding-top:1px;background:#fff;"><span>哥本哈根</span></div>
<div class="c" style="left:262px;top:501px;width:94px;height:26px;line-height:25px;padding-top:1px;background:#fff;"><span style="color:#cc1f2a">1-2</span>(1-0)</div>
<div class="c" style="left:356px;top:501px;width:39px;height:26px;line-height:25px;padding-top:1px;background:#fff;">5-4</div>
<div class="c" style="left:395px;top:501px;width:91px;height:26px;line-height:25px;padding-top:1px;background:#fff;"><span style="color:#1d7a1d">海登海姆</span></div>
<div class="c" style="left:486px;top:501px;width:51px;height:26px;line-height:25px;padding-top:1px;background:#fefaf7;">0.91</div>
<div class="c" style="left:537px;top:501px;width:88px;height:26px;line-height:25px;padding-top:1px;background:#fefaf7;">一球</div>
<div class="c" style="left:625px;top:501px;width:54px;height:26px;line-height:25px;padding-top:1px;background:#fefaf7;">0.98</div>
<div class="c" style="left:679px;top:501px;width:69px;height:26px;line-height:25px;padding-top:1px;background:#f0f8fc;">1.65</div>
<div class="c" style="left:748px;top:501px;width:69px;height:26px;line-height:25px;padding-top:1px;background:#f0f8fc;">3.83</div>
<div class="c" style="left:817px;top:501px;width:71px;height:26px;line-height:25px;padding-top:1px;background:#f0f8fc;">5.13</div>
<div class="c" style="left:888px;top:501px;width:40px;height:26px;line-height:25px;padding-top:1px;background:#fff;"><span style="color:#cc1f2a">胜</span></div>
<div class="c" style="left:928px;top:501px;width:41px;height:26px;line-height:25px;padding-top:1px;background:#fff;"><span style="color:#cc1f2a">赢</span></div>
<div class="c" style="left:969px;top:501px;width:61px;height:26px;line-height:25px;padding-top:1px;background:#fff;"><span style="color:#cc1f2a">大</span></div>
<div class="c lg" style="left:2px;top:527px;width:82px;height:26px;line-height:25px;padding-top:1px;background:#990099;">德甲</div>
<div class="c" style="left:84px;top:527px;width:80px;height:26px;line-height:25px;padding-top:1px;background:#f0f0f0;">25-02-08</div>
<div class="c" style="left:164px;top:527px;width:98px;height:26px;line-height:25px;padding-top:1px;background:#f0f0f0;"><span>弗赖堡</span></div>
<div class="c" style="left:262px;top:527px;width:94px;height:26px;line-height:25px;padding-top:1px;background:#f0f0f0;"><span style="color:#cc1f2a">1-0</span>(1-0)</div>
<div class="c" style="left:356px;top:527px;width:39px;height:26px;line-height:25px;padding-top:1px;background:#f0f0f0;">6-3</div>
<div class="c" style="left:395px;top:527px;width:91px;height:26px;line-height:25px;padding-top:1px;background:#f0f0f0;"><span style="color:#1d7a1d">海登海姆</span></div>
<div class="c" style="left:486px;top:527px;width:51px;height:26px;line-height:25px;padding-top:1px;background:#fefaf7;">0.93</div>
<div class="c" style="left:537px;top:527px;width:88px;height:26px;line-height:25px;padding-top:1px;background:#fefaf7;">半/一</div>
<div class="c" style="left:625px;top:527px;width:54px;height:26px;line-height:25px;padding-top:1px;background:#fefaf7;">0.96</div>
<div class="c" style="left:679px;top:527px;width:69px;height:26px;line-height:25px;padding-top:1px;background:#f0f8fc;">1.70</div>
<div class="c" style="left:748px;top:527px;width:69px;height:26px;line-height:25px;padding-top:1px;background:#f0f8fc;">3.83</div>
<div class="c" style="left:817px;top:527px;width:71px;height:26px;line-height:25px;padding-top:1px;background:#f0f8fc;">4.92</div>
<div class="c" style="left:888px;top:527px;width:40px;height:26px;line-height:25px;padding-top:1px;background:#f0f0f0;"><span style="color:#2020c0">负</span></div>
<div class="c" style="left:928px;top:527px;width:41px;height:26px;line-height:25px;padding-top:1px;background:#f0f0f0;"><span style="color:#2020c0">输</span></div>
<div class="c" style="left:969px;top:527px;width:61px;height:26px;line-height:25px;padding-top:1px;background:#f0f0f0;"><span style="color:#2020c0">小</span></div>
<div class="c lg" style="left:2px;top:553px;width:82px;height:26px;line-height:25px;padding-top:1px;background:#990099;">德甲</div>
<div class="c" style="left:84px;top:553px;width:80px;height:26px;line-height:25px;padding-top:1px;background:#fff;">25-02-01</div>
<div class="c" style="left:164px;top:553px;width:98px;height:26px;line-height:25px;padding-top:1px;background:#fff;"><span style="color:#1d7a1d">海登海姆</span></div>
<div class="c" style="left:262px;top:553px;width:94px;height:26px;line-height:25px;padding-top:1px;background:#fff;"><span style="color:#cc1f2a">1-2</span>(0-1)</div>
<div class="c" style="left:356px;top:553px;width:39px;height:26px;line-height:25px;padding-top:1px;background:#fff;">4-5</div>
<div class="c" style="left:395px;top:553px;width:91px;height:26px;line-height:25px;padding-top:1px;background:#fff;"><span>多特蒙德</span></div>
<div class="c" style="left:486px;top:553px;width:51px;height:26px;line-height:25px;padding-top:1px;background:#fefaf7;">0.99</div>
<div class="c" style="left:537px;top:553px;width:88px;height:26px;line-height:25px;padding-top:1px;background:#fefaf7;">受半/一</div>
<div class="c" style="left:625px;top:553px;width:54px;height:26px;line-height:25px;padding-top:1px;background:#fefaf7;">0.90</div>
<div class="c" style="left:679px;top:553px;width:69px;height:26px;line-height:25px;padding-top:1px;background:#f0f8fc;">4.58</div>
<div class="c" style="left:748px;top:553px;width:69px;height:26px;line-height:25px;padding-top:1px;background:#f0f8fc;">4.04</div>
<div class="c" style="left:817px;top:553px;width:71px;height:26px;line-height:25px;padding-top:1px;background:#f0f8fc;">1.70</div>
<div class="c" style="left:888px;top:553px;width:40px;height:26px;line-height:25px;padding-top:1px;background:#fff;"><span style="color:#2020c0">负</span></div>
<div class="c" style="left:928px;top:553px;width:41px;height:26px;line-height:25px;padding-top:1px;background:#fff;"><span style="color:#2020c0">输</span></div>
<div class="c" style="left:969px;top:553px;width:61px;height:26px;line-height:25px;padding-top:1px;background:#fff;"><span style="color:#1d7a1d">走</span></div>
<div class="c lg" style="left:2px;top:579px;width:82px;height:26px;line-height:25px;padding-top:1px;background:#990099;">德甲</div>
<div class="c" style="left:84px;top:579px;width:80px;height:26px;line-height:25px;padding-top:1px;background:#f0f0f0;">25-01-25</div>
<div class="c" style="left:164px;top:579px;width:98px;height:26px;line-height:25px;padding-top:1px;background:#f0f0f0;"><span>奥格斯堡</span></div>
<div class="c" style="left:262px;top:579px;width:94px;height:26px;line-height:25px;padding-top:1px;background:#f0f0f0;"><span style="color:#cc1f2a">2-1</span>(1-0)</div>
<div class="c" style="left:356px;top:579px;width:39px;height:26px;line-height:25px;padding-top:1px;background:#f0f0f0;">6-4</div>
<div class="c" style="left:395px;top:579px;width:91px;height:26px;line-height:25px;padding-top:1px;background:#f0f0f0;"><span style="color:#1d7a1d">海登海姆</span></div>
<div class="c" style="left:486px;top:579px;width:51px;height:26px;line-height:25px;padding-top:1px;background:#fefaf7;">1.02</div>
<div class="c" style="left:537px;top:579px;width:88px;height:26px;line-height:25px;padding-top:1px;background:#fefaf7;">半球</div>
<div class="c" style="left:625px;top:579px;width:54px;height:26px;line-height:25px;padding-top:1px;background:#fefaf7;">0.87</div>
<div class="c" style="left:679px;top:579px;width:69px;height:26px;line-height:25px;padding-top:1px;background:#f0f8fc;">1.95</div>
<div class="c" style="left:748px;top:579px;width:69px;height:26px;line-height:25px;padding-top:1px;background:#f0f8fc;">3.51</div>
<div class="c" style="left:817px;top:579px;width:71px;height:26px;line-height:25px;padding-top:1px;background:#f0f8fc;">3.88</div>
<div class="c" style="left:888px;top:579px;width:40px;height:26px;line-height:25px;padding-top:1px;background:#f0f0f0;"><span style="color:#2020c0">负</span></div>
<div class="c" style="left:928px;top:579px;width:41px;height:26px;line-height:25px;padding-top:1px;background:#f0f0f0;"><span style="color:#2020c0">输</span></div>
<div class="c" style="left:969px;top:579px;width:61px;height:26px;line-height:25px;padding-top:1px;background:#f0f0f0;"><span style="color:#cc1f2a">大</span></div>
<div class="c lg" style="left:2px;top:605px;width:82px;height:26px;line-height:25px;padding-top:1px;background:#990099;">德甲</div>
<div class="c" style="left:84px;top:605px;width:80px;height:26px;line-height:25px;padding-top:1px;background:#fff;">25-01-18</div>
<div class="c" style="left:164px;top:605px;width:98px;height:26px;line-height:25px;padding-top:1px;background:#fff;"><span style="color:#1d7a1d">海登海姆</span></div>
<div class="c" style="left:262px;top:605px;width:94px;height:26px;line-height:25px;padding-top:1px;background:#fff;"><span style="color:#cc1f2a">0-2</span>(0-1)</div>
<div class="c" style="left:356px;top:605px;width:39px;height:26px;line-height:25px;padding-top:1px;background:#fff;">4-4</div>
<div class="c" style="left:395px;top:605px;width:91px;height:26px;line-height:25px;padding-top:1px;background:#fff;"><span>圣保利</span></div>
<div class="c" style="left:486px;top:605px;width:51px;height:26px;line-height:25px;padding-top:1px;background:#fefaf7;">1.08</div>
<div class="c" style="left:537px;top:605px;width:88px;height:26px;line-height:25px;padding-top:1px;background:#fefaf7;">平/半</div>
<div class="c" style="left:625px;top:605px;width:54px;height:26px;line-height:25px;padding-top:1px;background:#fefaf7;">0.81</div>
<div class="c" style="left:679px;top:605px;width:69px;height:26px;line-height:25px;padding-top:1px;background:#f0f8fc;">2.37</div>
<div class="c" style="left:748px;top:605px;width:69px;height:26px;line-height:25px;padding-top:1px;background:#f0f8fc;">3.39</div>
<div class="c" style="left:817px;top:605px;width:71px;height:26px;line-height:25px;padding-top:1px;background:#f0f8fc;">2.96</div>
<div class="c" style="left:888px;top:605px;width:40px;height:26px;line-height:25px;padding-top:1px;background:#fff;"><span style="color:#2020c0">负</span></div>
<div class="c" style="left:928px;top:605px;width:41px;height:26px;line-height:25px;padding-top:1px;background:#fff;"><span style="color:#2020c0">输</span></div>
<div class="c" style="left:969px;top:605px;width:61px;height:26px;line-height:25px;padding-top:1px;background:#fff;"><span style="color:#2020c0">小</span></div>
<div class="c lg" style="left:2px;top:631px;width:82px;height:26px;line-height:25px;padding-top:1px;background:#990099;">德甲</div>
<div class="c" style="left:84px;top:631px;width:80px;height:26px;line-height:25px;padding-top:1px;background:#f0f0f0;">25-01-16</div>
<div class="c" style="left:164px;top:631px;width:98px;height:26px;line-height:25px;padding-top:1px;background:#f0f0f0;"><span>云达不莱梅</span></div>
<div class="c" style="left:262px;top:631px;width:94px;height:26px;line-height:25px;padding-top:1px;background:#f0f0f0;"><span style="color:#cc1f2a">3-3</span>(1-1)</div>
<div class="c" style="left:356px;top:631px;width:39px;height:26px;line-height:25px;padding-top:1px;background:#f0f0f0;">4-2</div>
<div class="c" style="left:395px;top:631px;width:91px;height:26px;line-height:25px;padding-top:1px;background:#f0f0f0;"><span style="color:#1d7a1d">海登海姆</span></div>
<div class="c" style="left:486px;top:631px;width:51px;height:26px;line-height:25px;padding-top:1px;background:#fefaf7;">0.98</div>
<div class="c" style="left:537px;top:631px;width:88px;height:26px;line-height:25px;padding-top:1px;background:#fefaf7;">半/一</div>
<div class="c" style="left:625px;top:631px;width:54px;height:26px;line-height:25px;padding-top:1px;background:#fefaf7;">0.91</div>
<div class="c" style="left:679px;top:631px;width:69px;height:26px;line-height:25px;padding-top:1px;background:#f0f8fc;">1.71</div>
<div class="c" style="left:748px;top:631px;width:69px;height:26px;line-height:25px;padding-top:1px;background:#f0f8fc;">4.02</div>
<div class="c" style="left:817px;top:631px;width:71px;height:26px;line-height:25px;padding-top:1px;background:#f0f8fc;">4.50</div>
<div class="c" style="left:888px;top:631px;width:40px;height:26px;line-height:25px;padding-top:1px;background:#f0f0f0;"><span style="color:#1d7a1d">平</span></div>
<div class="c" style="left:928px;top:631px;width:41px;height:26px;line-height:25px;padding-top:1px;background:#f0f0f0;"><span style="color:#cc1f2a">赢</span></div>
<div class="c" style="left:969px;top:631px;width:61px;height:26px;line-height:25px;padding-top:1px;background:#f0f0f0;"><span style="color:#cc1f2a">大</span></div>
<div class="c lg" style="left:2px;top:657px;width:82px;height:26px;line-height:25px;padding-top:1px;background:#990099;">德甲</div>
<div class="c" style="left:84px;top:657px;width:80px;height:26px;line-height:25px;padding-top:1px;background:#fff;">25-01-11</div>
<div class="c" style="left:164px;top:657px;width:98px;height:26px;line-height:25px;padding-top:1px;background:#fff;"><span style="color:#1d7a1d">海登海姆</span></div>
<div class="c" style="left:262px;top:657px;width:94px;height:26px;line-height:25px;padding-top:1px;background:#fff;"><span style="color:#cc1f2a">2-0</span>(1-0)</div>
<div class="c" style="left:356px;top:657px;width:39px;height:26px;line-height:25px;padding-top:1px;background:#fff;">5-4</div>
<div class="c" style="left:395px;top:657px;width:91px;height:26px;line-height:25px;padding-top:1px;background:#fff;"><span>柏林联合</span><span class="bd">1</span></div>
<div class="c" style="left:486px;top:657px;width:51px;height:26px;line-height:25px;padding-top:1px;background:#fefaf7;">0.91</div>
<div class="c" style="left:537px;top:657px;width:88px;height:26px;line-height:25px;padding-top:1px;background:#fefaf7;">受平/半</div>
<div class="c" style="left:625px;top:657px;width:54px;height:26px;line-height:25px;padding-top:1px;background:#fefaf7;">0.98</div>
<div class="c" style="left:679px;top:657px;width:69px;height:26px;line-height:25px;padding-top:1px;background:#f0f8fc;">3.08</div>
<div class="c" style="left:748px;top:657px;width:69px;height:26px;line-height:25px;padding-top:1px;background:#f0f8fc;">3.31</div>
<div class="c" style="left:817px;top:657px;width:71px;height:26px;line-height:25px;padding-top:1px;background:#f0f8fc;">2.34</div>
<div class="c" style="left:888px;top:657px;width:40px;height:26px;line-height:25px;padding-top:1px;background:#fff;"><span style="color:#cc1f2a">胜</span></div>
<div class="c" style="left:928px;top:657px;width:41px;height:26px;line-height:25px;padding-top:1px;background:#fff;"><span style="color:#cc1f2a">赢</span></div>
<div class="c" style="left:969px;top:657px;width:61px;height:26px;line-height:25px;padding-top:1px;background:#fff;"><span style="color:#2020c0">小</span></div>
<div class="c lg" style="left:2px;top:683px;width:82px;height:26px;line-height:25px;padding-top:1px;background:#990099;">德甲</div>
<div class="c" style="left:84px;top:683px;width:80px;height:26px;line-height:25px;padding-top:1px;background:#f0f0f0;">24-12-22</div>
<div class="c" style="left:164px;top:683px;width:98px;height:26px;line-height:25px;padding-top:1px;background:#f0f0f0;"><span>波鸿</span></div>
<div class="c" style="left:262px;top:683px;width:94px;height:26px;line-height:25px;padding-top:1px;background:#f0f0f0;"><span style="color:#cc1f2a">2-0</span>(2-0)</div>
<div class="c" style="left:356px;top:683px;width:39px;height:26px;line-height:25px;padding-top:1px;background:#f0f0f0;">5-2</div>
<div class="c" style="left:395px;top:683px;width:91px;height:26px;line-height:25px;padding-top:1px;background:#f0f0f0;"><span style="color:#1d7a1d">海登海姆</span></div>
<div class="c" style="left:486px;top:683px;width:51px;height:26px;line-height:25px;padding-top:1px;background:#fefaf7;">0.76</div>
<div class="c" style="left:537px;top:683px;width:88px;height:26px;line-height:25px;padding-top:1px;background:#fefaf7;">平/半</div>
<div class="c" style="left:625px;top:683px;width:54px;height:26px;line-height:25px;padding-top:1px;background:#fefaf7;">1.14</div>
<div class="c" style="left:679px;top:683px;width:69px;height:26px;line-height:25px;padding-top:1px;background:#f0f8fc;">2.09</div>
<div class="c" style="left:748px;top:683px;width:69px;height:26px;line-height:25px;padding-top:1px;background:#f0f8fc;">3.52</div>
<div class="c" style="left:817px;top:683px;width:71px;height:26px;line-height:25px;padding-top:1px;background:#f0f8fc;">3.43</div>
<div class="c" style="left:888px;top:683px;width:40px;height:26px;line-height:25px;padding-top:1px;background:#f0f0f0;"><span style="color:#2020c0">负</span></div>
<div class="c" style="left:928px;top:683px;width:41px;height:26px;line-height:25px;padding-top:1px;background:#f0f0f0;"><span style="color:#2020c0">输</span></div>
<div class="c" style="left:969px;top:683px;width:61px;height:26px;line-height:25px;padding-top:1px;background:#f0f0f0;"><span style="color:#2020c0">小</span></div>
<div class="sel" style="left:522px;top:410px;width:61px;height:19px;font-size:13px;line-height:17px">Crow*<svg width="10" height="6" viewBox="0 0 10 6" style="position:absolute;right:4px;top:50%;margin-top:-3px"><path d="M1 1 L5 5 L9 1" stroke="#000" stroke-width="2" fill="none"/></svg></div>
<div class="sel" style="left:590px;top:410px;width:51px;height:19px;font-size:13px;line-height:17px">终指<svg width="10" height="6" viewBox="0 0 10 6" style="position:absolute;right:4px;top:50%;margin-top:-3px"><path d="M1 1 L5 5 L9 1" stroke="#000" stroke-width="2" fill="none"/></svg></div>
<div class="sel" style="left:718px;top:410px;width:70px;height:19px;font-size:13px;line-height:17px">平均值<svg width="10" height="6" viewBox="0 0 10 6" style="position:absolute;right:4px;top:50%;margin-top:-3px"><path d="M1 1 L5 5 L9 1" stroke="#000" stroke-width="2" fill="none"/></svg></div>
<div class="sel" style="left:796px;top:410px;width:51px;height:19px;font-size:13px;line-height:17px">终指<svg width="10" height="6" viewBox="0 0 10 6" style="position:absolute;right:4px;top:50%;margin-top:-3px"><path d="M1 1 L5 5 L9 1" stroke="#000" stroke-width="2" fill="none"/></svg></div>
<div class="sel" style="left:933px;top:410px;width:51px;height:19px;font-size:13px;line-height:17px">全场<svg width="10" height="6" viewBox="0 0 10 6" style="position:absolute;right:4px;top:50%;margin-top:-3px"><path d="M1 1 L5 5 L9 1" stroke="#000" stroke-width="2" fill="none"/></svg></div>
<div class="c" style="left:3px;top:709px;width:1027px;height:26px;line-height:25px;padding-top:1px;letter-spacing:.22px">近<span class="r">10</span>场,胜2平1负7, 胜率:<span class="r">20%</span> 让胜率:<span class="r">30%</span> 大率:<span class="r">40%</span> 单率:<span class="r">50%</span></div>
</body></html>
